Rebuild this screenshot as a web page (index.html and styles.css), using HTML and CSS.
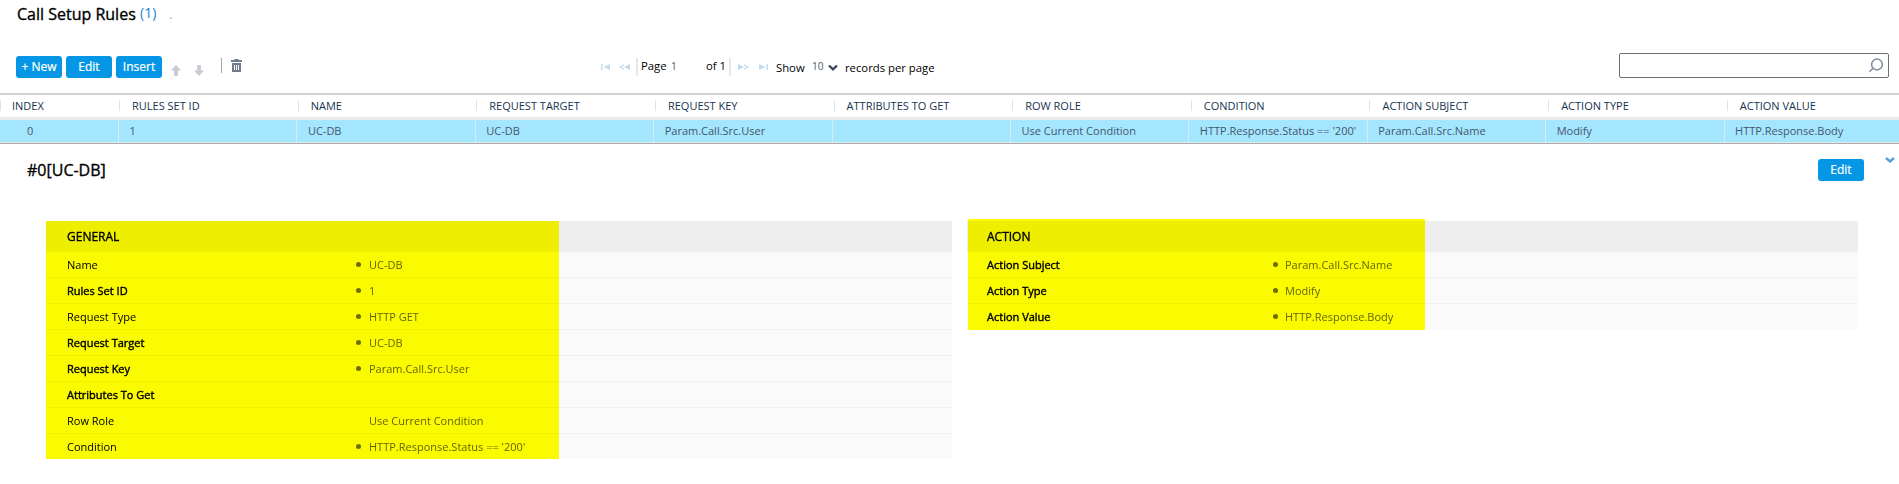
FILE: index.html
```html
<!DOCTYPE html>
<html lang="en">
<head>
<meta charset="utf-8">
<title>Call Setup Rules</title>
<link rel="stylesheet" href="styles.css">
</head>
<body>
<header class="title"><h1>Call Setup Rules</h1><span class="count">(1)</span><span class="dot">.</span></header>
<div class="toolbar">
  <div class="actions">
    <button class="btn">+ New</button><button class="btn">Edit</button><button class="btn">Insert</button>
    <svg class="up" width="10" height="11" viewBox="0 0 10 11"><path d="M5 0 10 5.500H7V11H3V5.500H0Z"/></svg>
    <svg class="down" width="10" height="11" viewBox="0 0 10 11"><path d="M5 11 10 5.500H7V0H3V5.500H0Z"/></svg>
    <span class="divider"></span>
    <svg class="trash" width="11" height="13" viewBox="0 0 11 13"><path fill-rule="evenodd" d="M3.500 0H7.500V1H11V3H0V1H3.500ZM1 4H10V13H1ZM3 6V11H4V6ZM5 6V11H6V6ZM7 6V11H8V6Z"/></svg>
  </div>
  <div class="pager">
    <svg width="9" height="6" viewBox="0 0 9 6"><path d="M0 0H1.500V6H0ZM9 0V6L2.500 3Z"/></svg>
    <svg class="prev" width="11" height="6" viewBox="0 0 11 6"><path d="M5 0 0 3 5 6V4.500L2.500 3 5 1.500ZM11 0V6L5 3Z"/></svg>
    <span class="bar"></span>
    <span class="page">Page</span><span class="num">1</span><span class="of">of 1</span>
    <span class="bar bar-end"></span>
    <svg class="next" width="11" height="6" viewBox="0 0 11 6"><path d="M6 0 11 3 6 6V4.500L8.500 3 6 1.500ZM0 0V6L6 3Z"/></svg>
    <svg class="last" width="9" height="6" viewBox="0 0 9 6"><path d="M7.500 0H9V6H7.500ZM0 0V6L6.500 3Z"/></svg>
    <span class="show">Show</span><span class="size">10</span>
    <svg class="caret" width="10" height="8" viewBox="0 0 10 8"><path d="M1 1.500 5 5.300 9 1.500"/></svg>
    <span class="records">records per page</span>
  </div>
  <div class="search"><svg width="16" height="16" viewBox="0 0 16 16"><circle cx="9" cy="6.500" r="5.400"/><path d="M5 10.300 1.500 13.800"/></svg></div>
</div>
<div class="grid">
  <div class="row head">
    <span>INDEX</span><span>RULES SET ID</span><span>NAME</span><span>REQUEST TARGET</span><span>REQUEST KEY</span><span>ATTRIBUTES TO GET</span><span>ROW ROLE</span><span>CONDITION</span><span>ACTION SUBJECT</span><span>ACTION TYPE</span><span>ACTION VALUE</span>
  </div>
  <div class="row data">
    <span>0</span><span>1</span><span>UC-DB</span><span>UC-DB</span><span>Param.Call.Src.User</span><span></span><span>Use Current Condition</span><span>HTTP.Response.Status == '200'</span><span>Param.Call.Src.Name</span><span>Modify</span><span>HTTP.Response.Body</span>
  </div>
</div>
<div class="detail-head">
  <h2>#0[UC-DB]</h2>
  <button class="btn">Edit</button>
  <svg class="collapse" width="10" height="7" viewBox="0 0 10 7"><path d="M1 1 5 4.500 9 1"/></svg>
</div>
<div class="panels">
  <section class="panel general">
    <h3>GENERAL</h3>
    <dl>
      <div><dt>Name</dt><dd class="set">UC-DB</dd></div>
      <div><dt class="key">Rules Set ID</dt><dd class="set">1</dd></div>
      <div><dt>Request Type</dt><dd class="set">HTTP GET</dd></div>
      <div><dt class="key">Request Target</dt><dd class="set">UC-DB</dd></div>
      <div><dt class="key">Request Key</dt><dd class="set">Param.Call.Src.User</dd></div>
      <div><dt class="key">Attributes To Get</dt><dd></dd></div>
      <div><dt>Row Role</dt><dd>Use Current Condition</dd></div>
      <div><dt>Condition</dt><dd class="set">HTTP.Response.Status == '200'</dd></div>
    </dl>
    <div class="marker"></div>
  </section>
  <section class="panel action">
    <h3>ACTION</h3>
    <dl>
      <div><dt class="key">Action Subject</dt><dd class="set">Param.Call.Src.Name</dd></div>
      <div><dt class="key">Action Type</dt><dd class="set">Modify</dd></div>
      <div><dt class="key">Action Value</dt><dd class="set">HTTP.Response.Body</dd></div>
    </dl>
    <div class="marker"></div>
  </section>
</div>
</body>
</html>
```
FILE: styles.css
```css
* { box-sizing: border-box; }
body { margin: 0; background: #fff; color: #000; font-family: "Open Sans", "Noto Sans", sans-serif; font-size: 11px; overflow: hidden; }
h1, h2, h3, dl, dd { margin: 0; }
svg { display: block; flex: none; }
span { white-space: nowrap; }

.title { display: flex; height: 50px; padding-left: 17px; line-height: 28px; }
h1 { width: 123px; font-size: 16px; font-weight: 400; white-space: nowrap; -webkit-text-stroke: .35px #000; }
.count { width: 29px; color: #1583d8; font-size: 14px; line-height: 26px; }
.dot { color: #b0b0b0; font-size: 13px; line-height: 29px; }

.toolbar { display: flex; height: 43px; }
.actions { display: flex; width: 600px; padding: 6px 0 0 16px; }
.btn { width: 46px; height: 22px; margin: 0 4px 0 0; padding: 0; border: 0; border-radius: 3px; background: #0597e5; color: #fff; font: 400 12px/20px "Open Sans", sans-serif; -webkit-text-stroke: .2px #fff; }
.up, .down { fill: #c9ccd4; margin-top: 9px; }
.up { margin-left: 5px; }
.down { margin-left: 13px; }
.divider { width: 1px; height: 15px; margin: 2px 9px 0 17px; background: #a3a7af; }
.trash { margin-top: 3px; fill: #717b90; }

.pager { display: flex; width: 1019px; line-height: 20px; padding: 6px 0 0 1px; font-size: 11px; }
.pager > svg { margin-top: 8px; fill: #c3dced; }
.pager > .prev { margin-left: 9px; }
.bar { width: 2px; height: 18px; margin: 2px 3px 0 6px; background: #e8e8e8; }
.page, .of, .show, .records { font-size: 11.3px; }
.page { width: 30px; }
.num { width: 35px; font-size: 10px; color: #4b5870; }
.of { width: 18px; }
.bar-end { margin: 2px 7px 0 5px; }
.pager > .last { margin-left: 10px; }
.show { width: 36px; margin-left: 8px; padding-top: 2px; }
.size { width: 16px; font-size: 10px; color: #4b5870; }
.pager > .caret { margin-top: 8px; fill: none; stroke: #3c4658; stroke-width: 2.4; }
.records { margin-left: 7px; padding-top: 2px; }

.search { display: flex; justify-content: flex-end; width: 270px; height: 25px; margin-top: 3px; padding: 4px 4px 0 0; border: 1px solid #707070; border-radius: 2px; }
.search svg { fill: none; stroke: #808ba0; stroke-width: 1.5; }

.grid { border-top: 2px solid #cdd2d7; }
.row { display: grid; }
.head { grid-template-columns: 119px repeat(10, 178.65px); height: 25px; padding-top: 5px; border-bottom: 3px solid #e9e9e9; line-height: 12px; font-size: 11px; color: #16344f; }
.head span { height: 11px; padding-left: 12px; border-left: 1px solid #dfe1e4; }
.head span:first-child { padding-left: 11px; }
.data { grid-template-columns: 118px repeat(10, 178.4px); height: 24px; background: #a5e6ff; border-bottom: 1px solid #a9adb0; box-shadow: inset 0 -1px #e4e8ea; line-height: 22px; font-size: 11px; color: #44566a; }
.data span { height: 22px; padding-left: 10.5px; border-left: 1px solid #d9eaf2; }
.data span:first-child { padding-left: 27px; border: 0; }

.detail-head { display: flex; height: 77px; padding: 15px 0 0 27px; }
h2 { width: 1791px; font-size: 16px; font-weight: 400; line-height: 22px; -webkit-text-stroke: .35px #000; }
.detail-head .btn { margin-right: 21px; }
.collapse { margin-top: -2px; fill: none; stroke: #55a0dc; stroke-width: 2.4; }

.panels { display: flex; align-items: flex-start; gap: 15px; padding-left: 46px; }
.panel { position: relative; isolation: isolate; background: #fff; }
.general { width: 906px; }
.action { width: 891px; }
h3 { height: 31px; padding-left: 21px; background: #eee; font-size: 12px; line-height: 31px; font-weight: 400; -webkit-text-stroke: .35px #000; }
dl div { display: flex; height: 26px; background: #fafafa; border-bottom: 1px solid #f0f0f0; line-height: 25px; padding-left: 21px; }
dl div:last-child { height: 25px; border: 0; }
dt { width: 289px; }
.action h3, .action dl div { padding-left: 20px; }
.action dt { width: 286px; }
.key { -webkit-text-stroke: .4px #000; }
dd { position: relative; padding-left: 13px; color: #666; }
.action dd { padding-left: 12px; }
.set::before { content: ""; position: absolute; left: 0; top: 10px; width: 5px; height: 5px; border-radius: 50%; background: #6d6d6d; }
.marker { position: absolute; background: #ff0; mix-blend-mode: multiply; }
.general .marker { left: 0; top: 0; width: 513px; height: 238px; }
.action .marker { left: 1px; top: -2px; width: 457px; height: 111px; }
```
